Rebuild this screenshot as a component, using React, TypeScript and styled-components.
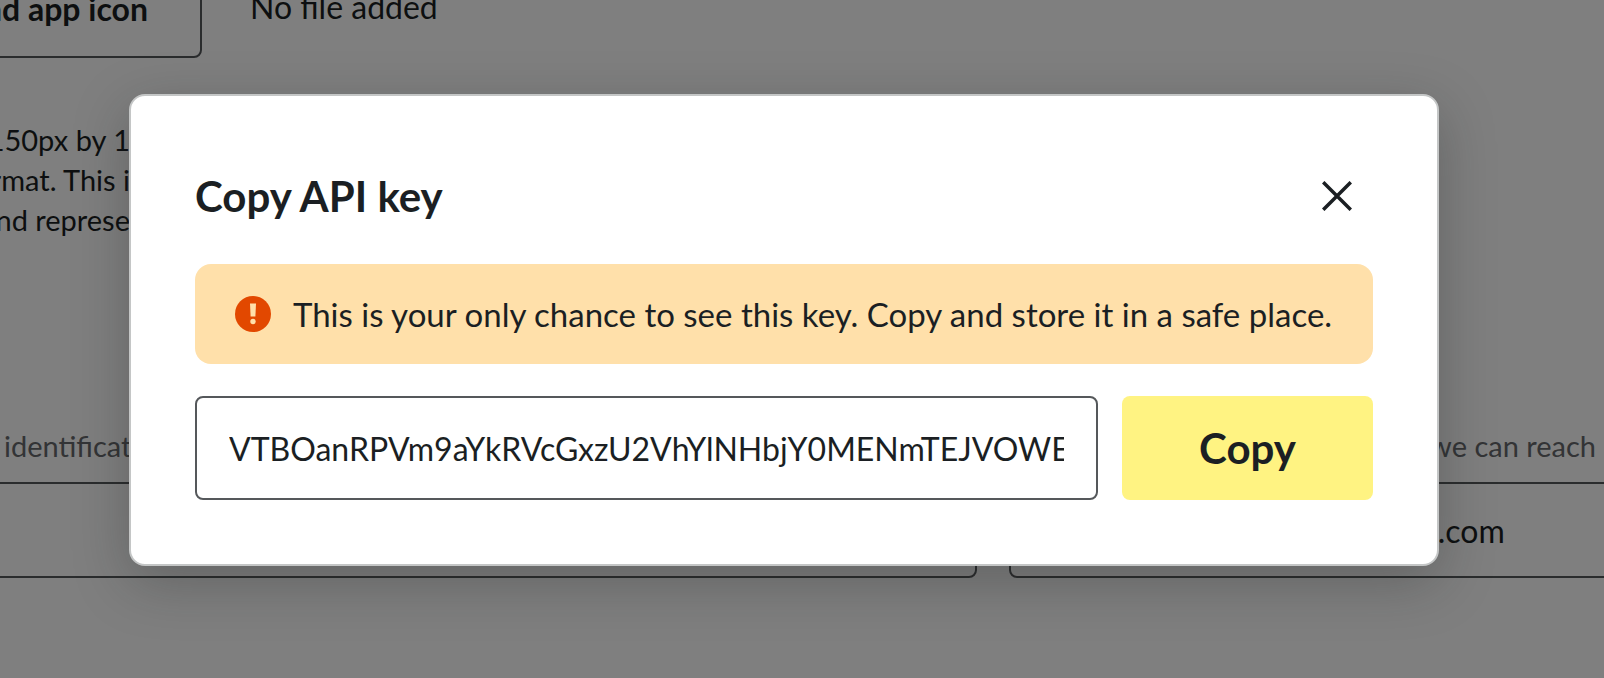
import React, { useState } from 'react';
import styled, { createGlobalStyle } from 'styled-components';

const GlobalStyle = createGlobalStyle`
  *, *::before, *::after { box-sizing: border-box; }
  body { margin: 0; background: #fff; color: #1b1f23; font-family: Lato, "Open Sans", sans-serif; }
  button, input { font: inherit; color: inherit; }
`;

const Page = styled.div`
  position: relative;
  height: 100vh;
  overflow: hidden;
`;

const Settings = styled.main`
  margin: -38px -280px 0 -240px;
`;

const UploadRow = styled.div`
  display: flex;
  align-items: center;
  gap: 48px;
`;

const UploadButton = styled.button`
  width: 442px;
  height: 96px;
  padding: 0 52px 4px;
  border: 2px solid #55585b;
  border-radius: 8px;
  background: transparent;
  font-size: 32px;
  font-weight: 700;
  text-align: right;
`;

const FileStatus = styled.span`
  padding-bottom: 6px;
  font-size: 32px;
  line-height: 40px;
`;

const Help = styled.p`
  width: 370px;
  margin: 62px 0 186px;
  font-size: 29px;
  line-height: 40px;
  text-align: right;
  white-space: pre-line;
`;

const FieldRow = styled.div`
  display: grid;
  grid-template-columns: 1217px 1fr;
  gap: 32px;
`;

const Field = styled.label`
  display: flex;
  flex-direction: column;
  gap: 16px;
  white-space: nowrap;
`;

const Hint = styled.span<{ $end?: boolean }>`
  padding: 0 288px 0 244px;
  font-size: 29px;
  line-height: 40px;
  color: #66696c;
  text-align: ${({ $end }) => ($end ? 'right' : 'left')};
`;

const TextInput = styled.input<{ $tall?: boolean }>`
  min-width: 0;
  width: 100%;
  height: ${({ $tall }) => ($tall ? 104 : 96)}px;
  padding: 0 32px;
  border: 2px solid #55585b;
  border-radius: 8px;
  background: transparent;
  color: #1b1f23;
  font-size: 32px;
`;

const Overlay = styled.div`
  position: absolute;
  inset: 0;
  padding: 94px 165px 0 129px;
  background: rgba(0, 0, 0, 0.5);
`;

const Dialog = styled.section`
  padding: 64px;
  border: 2px solid #c4c6c6;
  border-radius: 16px;
  background: #fff;
  box-shadow: 0 16px 56px rgba(24, 28, 28, 0.28);
`;

const DialogHeader = styled.header`
  display: flex;
  align-items: center;
  justify-content: space-between;
  height: 72px;
  margin-bottom: 32px;
`;

const Title = styled.h2`
  margin: 0;
  font-size: 42px;
  line-height: 48px;
  font-weight: 700;
`;

const CloseButton = styled.button`
  display: grid;
  place-items: center;
  width: 72px;
  height: 72px;
  padding: 0;
  border: 0;
  background: transparent;
`;

const Notice = styled.div`
  display: flex;
  align-items: center;
  gap: 22px;
  min-height: 100px;
  padding: 0 32px 0 40px;
  border-radius: 16px;
  background: #ffe0aa;
  font-size: 33px;
  line-height: 48px;
`;

const KeyRow = styled.div`
  display: grid;
  grid-template-columns: 1fr 251px;
  gap: 24px;
  margin-top: 32px;
`;

const CopyButton = styled.button`
  border: 0;
  border-radius: 8px;
  background: #fff382;
  font-size: 42px;
  font-weight: 700;
`;

export default function App() {
  const [email, setEmail] = useState('developer.contact@example.com');
  const [name, setName] = useState('');
  return (
    <Page>
      <GlobalStyle />
      <Settings>
        <UploadRow>
          <UploadButton type="button">Upload app icon</UploadButton>
          <FileStatus>No file added</FileStatus>
        </UploadRow>
        <Help>{'150px by 1\nformat. This i\nand represe'}</Help>
        <FieldRow>
          <Field>
            <Hint>identification</Hint>
            <TextInput value={name} onChange={(e) => setName(e.target.value)} />
          </Field>
          <Field>
            <Hint $end>we can reach</Hint>
            <TextInput value={email} onChange={(e) => setEmail(e.target.value)} />
          </Field>
        </FieldRow>
      </Settings>
      <Overlay>
        <Dialog role="dialog" aria-modal="true" aria-labelledby="dialog-title">
          <DialogHeader>
            <Title id="dialog-title">Copy API key</Title>
            <CloseButton type="button" aria-label="Close">
              <svg width="30" height="30" viewBox="0 0 30 30" fill="none" stroke="#1b1f23" strokeWidth="3.5">
                <path d="M1.2 1.2 28.8 28.8M28.8 1.2 1.2 28.8" />
              </svg>
            </CloseButton>
          </DialogHeader>
          <Notice role="alert">
            <svg width="36" height="36" viewBox="0 0 36 36" aria-hidden="true">
              <circle cx="18" cy="18" r="18" fill="#e24800" />
              <path d="M15 7.500h6l-.6 13h-4.800z" fill="#ffe0aa" />
              <circle cx="18" cy="25.500" r="2.700" fill="#ffe0aa" />
            </svg>
            <span>This is your only chance to see this key. Copy and store it in a safe place.</span>
          </Notice>
          <KeyRow>
            <TextInput $tall readOnly aria-label="API key" value="VTBOanRPVm9aYkRVcGxzU2VhYlNHbjY0MENmTEJVOWE" />
            <CopyButton type="button">Copy</CopyButton>
          </KeyRow>
        </Dialog>
      </Overlay>
    </Page>
  );
}
